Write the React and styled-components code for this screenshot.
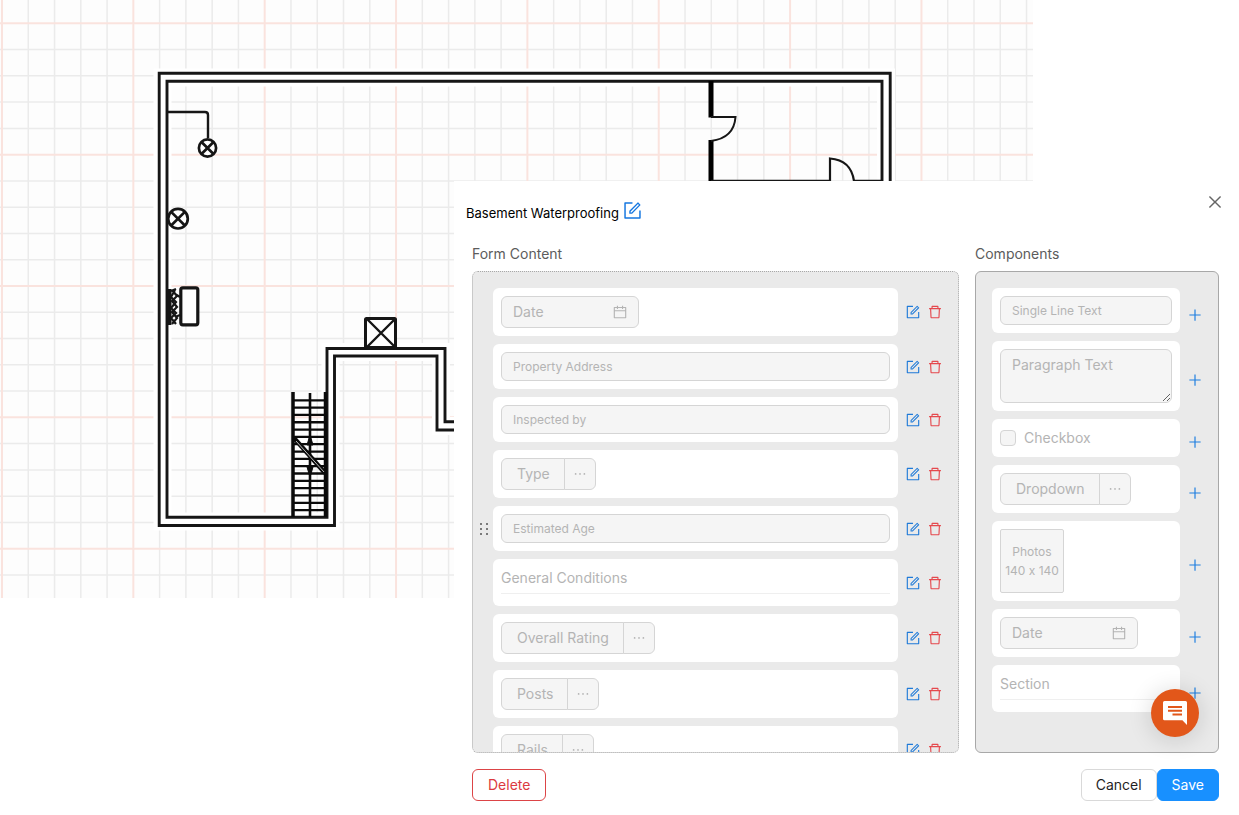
import React from "react";
import styled, { createGlobalStyle } from "styled-components";
import {
  AiOutlineForm,
  AiOutlineDelete,
  AiOutlineCalendar,
  AiOutlineClose,
  AiOutlinePlus,
  AiOutlineEllipsis,
} from "react-icons/ai";

const GlobalStyle = createGlobalStyle`
  * { box-sizing: border-box; }
  body {
    margin: 0;
    background: #fff;
    color: #000;
    font: 14px/22px Inter, "Liberation Sans", sans-serif;
    font-feature-settings: "calt" 0;
  }
  button, input, textarea { font: inherit; margin: 0; }
  h1, h2, p, ul { margin: 0; padding: 0; font: inherit; }
  ul { list-style: none; }
`;

const Stage = styled.main`
  display: grid;
  grid-template-columns: minmax(0, 1fr);
  grid-template-rows: minmax(0, 1fr);
  height: 100vh;
  min-height: 480px;
  overflow: hidden;
`;

const Plan = styled.svg`
  grid-area: 1 / 1;
  justify-self: start;
  align-self: start;
  width: 1033px;
  height: 598px;
`;

const Dialog = styled.section`
  grid-area: 1 / 1;
  z-index: 1;
  display: flex;
  flex-direction: column;
  min-height: 0;
  margin: 181px 0 0 454px;
  padding: 8px 20px 14px 18px;
  background: #fff;
`;

const DialogHeader = styled.header`
  display: flex;
  align-items: center;
  justify-content: space-between;
  height: 48px;
  margin: 0 -5px 0 -6px;
`;

const TitleGroup = styled.div`
  display: flex;
  align-items: center;
  gap: 3px;
`;

const Title = styled.h1`
  font-size: 13px;
  line-height: 20px;
`;

const IconButton = styled.button`
  display: flex;
  flex: none;
  padding: 0;
  border: 0;
  background: none;
  color: ${(p) => p.$color};
  font-size: ${(p) => p.$size || 16}px;
  cursor: pointer;
`;

const CloseButton = styled(IconButton)`
  align-self: flex-start;
  padding-top: 4px;
`;

const TitleEdit = styled(IconButton)`
  padding-bottom: 5px;
`;

const Columns = styled.div`
  flex: 1;
  display: grid;
  grid-template-columns: minmax(0, 1fr) 244px;
  grid-template-rows: auto minmax(0, 1fr);
  column-gap: 16px;
  min-height: 0;
`;

const ColumnTitle = styled.h2`
  height: 34px;
  padding-top: 6px;
  color: #5c5c5c;
  font-size: 14px;
`;

const Panel = styled.ul`
  display: flex;
  flex-direction: column;
  gap: 8px;
  min-height: 0;
  padding: 16px 0;
  overflow-y: auto;
  scrollbar-width: none;
  border: 1px ${(p) => p.$line} #a8a8a8;
  border-radius: 6px;
  background: #eaeaea;
`;

const FormRow = styled.li`
  flex: none;
  display: grid;
  grid-template-columns: 20px minmax(0, 1fr) 60px;
  align-items: center;
`;

const PaletteRow = styled.li`
  flex: none;
  display: grid;
  grid-template-columns: minmax(0, 1fr) 38px;
  align-items: center;
  padding-left: 16px;
`;

const Card = styled.div`
  padding: 8px;
  border-radius: 6px;
  background: #fff;
`;

const Actions = styled.div`
  display: flex;
  gap: 6px;
  padding-left: 7px;
`;

const AddButton = styled(IconButton)`
  padding: 8px 0 0 7px;
`;

const Handle = styled.span`
  display: grid;
  grid-template-columns: 2px 2px;
  gap: 3px 4px;
  justify-content: center;
  padding-left: 2px;
`;

const HandleDot = styled.i`
  height: 2px;
  border-radius: 1px;
  background: #555;
`;

const field = `
  border: 1px solid #d5d5d5;
  border-radius: 6px;
  background: #f5f5f5;
  color: #b4b4b4;
`;

const TextInput = styled.input`
  display: block;
  width: 100%;
  height: 29px;
  padding: 0 11px;
  ${field}
  font-size: 12px;
  &::placeholder { color: #b4b4b4; opacity: 1; }
`;

const TextArea = styled.textarea`
  display: block;
  width: 100%;
  height: 54px;
  padding: 4px 11px;
  ${field}
  resize: vertical;
  overflow: hidden;
  &::placeholder { color: #b4b4b4; opacity: 1; }
`;

const DateField = styled.div`
  display: flex;
  align-items: center;
  width: 138px;
  height: 32px;
  padding: 0 10px 0 11px;
  ${field}
`;

const DateInput = styled.input`
  flex: 1;
  width: 0;
  min-width: 0;
  padding: 0;
  border: 0;
  background: none;
  &::placeholder { color: #b4b4b4; opacity: 1; }
`;

const SplitButton = styled.div`
  display: inline-flex;
  height: 32px;
  vertical-align: top;
`;

const SplitMain = styled.button`
  padding: 0 14px 0 15px;
  ${field}
  border-radius: 6px 0 0 6px;
`;

const SplitMore = styled.button`
  display: flex;
  align-items: center;
  justify-content: center;
  width: 32px;
  margin-left: -1px;
  padding: 0;
  ${field}
  border-radius: 0 6px 6px 0;
`;

const CheckLabel = styled.label`
  display: flex;
  align-items: center;
  gap: 8px;
  color: #b4b4b4;
`;

const CheckInput = styled.input`
  appearance: none;
  width: 16px;
  height: 16px;
  ${field}
  border-radius: 4px;
`;

const PhotoBox = styled.div`
  display: flex;
  flex-direction: column;
  align-items: center;
  justify-content: center;
  width: 64px;
  height: 64px;
  ${field}
  border-radius: 2px;
  font-size: 12px;
  line-height: 19px;
  white-space: nowrap;
`;

const SectionText = styled.p`
  padding-bottom: 4px;
  margin-bottom: 4px;
  border-bottom: 1px solid #efefef;
  color: #b4b4b4;
`;

const Footer = styled.footer`
  display: flex;
  padding-top: 16px;
`;

const Button = styled.button`
  height: 32px;
  padding: 0 15px;
  border: 1px solid ${(p) => p.$border};
  border-radius: 6px;
  background: ${(p) => p.$bg || "#fff"};
  color: ${(p) => p.$color};
  cursor: pointer;
`;

const FooterEnd = styled.div`
  display: flex;
  margin-left: auto;

  ${Button} {
    padding: 0 14px;
  }
`;

const ChatButton = styled.button`
  position: fixed;
  z-index: 2;
  right: 40px;
  bottom: 78px;
  display: grid;
  place-items: center;
  width: 48px;
  height: 48px;
  padding: 0;
  border: 0;
  border-radius: 50%;
  background: #e2571a;
  box-shadow: 0 2px 24px rgba(0, 0, 0, 0.16);
  cursor: pointer;
`;

const PITCH = 26.27;

function GridLines() {
  const lines = [];
  for (let i = 0; i < 40; i++) {
    const x = 2 + i * PITCH;
    const red = i % 5 === 0;
    lines.push({ key: "v" + i, d: `M${x} 0V598`, red });
  }
  for (let j = 0; j < 22; j++) {
    const y = 23.3 + j * PITCH;
    lines.push({ key: "h" + j, d: `M0 ${y}H1033`, red: j % 5 === 0 });
  }
  lines.sort((a, b) => a.red - b.red);
  return lines.map((l) => (
    <path
      key={l.key}
      d={l.d}
      stroke={l.red ? "#fae3de" : "#ebebeb"}
      strokeWidth={l.red ? 2 : 1.5}
    />
  ));
}

function Lamp({ cx, cy, r }) {
  const k = r * 0.7;
  return (
    <g strokeWidth="2.700" fill="none">
      <circle cx={cx} cy={cy} r={r} fill="#fff" />
      <path d={`M${cx - k} ${cy - k}L${cx + k} ${cy + k}M${cx + k} ${cy - k}L${cx - k} ${cy + k}`} />
    </g>
  );
}

function FloorPlan() {
  const treads = Array.from({ length: 16 }, (_, i) => 400.3 + i * 7.32);
  return (
    <Plan viewBox="0 0 1033 598" role="img" aria-label="Basement floor plan">
      <rect width="1033" height="598" fill="#fdfdfd" />
      <GridLines />
      <g fill="none" stroke="#161616">
        <path
          d="M455 426H441V352H330.500V521.500H162.500V77.500H886V190"
          stroke="#fff"
          strokeWidth="18"
        />
        <path d="M456 430H437V356H334.500V525.500H159.200V73.300H890.200V190" strokeWidth="2.900" />
        <path d="M456 421.700H445V348.500H327V517.200H167V81.300H882V190" strokeWidth="2.900" />
        <path d="M168 112H205Q208 112 208 115V138" strokeWidth="2.400" />
        <Lamp cx={207.5} cy={148} r={8.6} />
        <Lamp cx={178} cy={218.700} r={9.8} />
        <rect x="180.800" y="287.800" width="17" height="37" rx="2" fill="#fff" strokeWidth="3.200" />
        <path d="M169.500 289V325" strokeWidth="4" />
        <path
          d="M171 291L176 289M172 290L177 296L172 301L177 307L172 312L177 318L172 324M175 290L171 297L176 302L171 308L176 313L171 318L176 324M175 294L180 297M175 317L180 315"
          strokeWidth="2.200"
        />
        <rect x="365.500" y="318.500" width="30" height="29" rx="1" fill="#fff" strokeWidth="3" />
        <path d="M367 319L395 347M395 319L367 347" strokeWidth="2.400" />
        <path d="M711 81V117.500M711 140V181" strokeWidth="5" stroke="#000" />
        <path d="M711 117H735.500Q734 138 711 141" strokeWidth="2" />
        <path d="M711 180.800H830M853 180.800H882" strokeWidth="2.200" />
        <path d="M830 181V158.500Q851 160 854 181" strokeWidth="2.200" />
        <g stroke="#0a0a0a">
          <path d="M293 392V517M325.500 392V517" strokeWidth="3.500" />
          <path d="M310 393V517" strokeWidth="2.600" />
          {treads.map((y) => (
            <path key={y} d={`M293 ${y}H326`} strokeWidth="2.300" />
          ))}
          <path d="M294 438L325 473" strokeWidth="4.500" />
          <path d="M296 441L324 472" strokeWidth="1" stroke="#bbb" />
          <path d="M310 435l3 10h-6zM310 477l3-10h-6z" strokeWidth="1" fill="#0a0a0a" />
        </g>
      </g>
    </Plan>
  );
}

function Control({ kind, label }) {
  switch (kind) {
    case "date":
      return (
        <DateField>
          <DateInput disabled placeholder={label} aria-label={label} />
          <AiOutlineCalendar size={16} />
        </DateField>
      );
    case "text":
      return <TextInput disabled placeholder={label} aria-label={label} />;
    case "paragraph":
      return <TextArea disabled placeholder={label} aria-label={label} />;
    case "checkbox":
      return (
        <CheckLabel>
          <CheckInput type="checkbox" disabled />
          {label}
        </CheckLabel>
      );
    case "dropdown":
      return (
        <SplitButton>
          <SplitMain disabled>{label}</SplitMain>
          <SplitMore disabled aria-label={`${label} options`}>
            <AiOutlineEllipsis size={16} />
          </SplitMore>
        </SplitButton>
      );
    case "photos":
      return (
        <PhotoBox>
          <span>{label}</span>
          <span>140 x 140</span>
        </PhotoBox>
      );
    default:
      return <SectionText>{label}</SectionText>;
  }
}

const formItems = [
  { kind: "date", label: "Date" },
  { kind: "text", label: "Property Address" },
  { kind: "text", label: "Inspected by" },
  { kind: "dropdown", label: "Type" },
  { kind: "text", label: "Estimated Age", hovered: true },
  { kind: "section", label: "General Conditions" },
  { kind: "dropdown", label: "Overall Rating" },
  { kind: "dropdown", label: "Posts" },
  { kind: "dropdown", label: "Rails" },
];

const paletteItems = [
  { kind: "text", label: "Single Line Text" },
  { kind: "paragraph", label: "Paragraph Text" },
  { kind: "checkbox", label: "Checkbox" },
  { kind: "dropdown", label: "Dropdown" },
  { kind: "photos", label: "Photos" },
  { kind: "date", label: "Date" },
  { kind: "section", label: "Section" },
];

export default function App() {
  return (
    <>
      <GlobalStyle />
      <Stage>
        <FloorPlan />
        <Dialog role="dialog" aria-labelledby="dialog-title">
          <DialogHeader>
            <TitleGroup>
              <Title id="dialog-title">Basement Waterproofing</Title>
              <TitleEdit $color="#1677e0" $size={21} aria-label="Rename form">
                <AiOutlineForm />
              </TitleEdit>
            </TitleGroup>
            <CloseButton $color="#666" $size={18} aria-label="Close">
              <AiOutlineClose />
            </CloseButton>
          </DialogHeader>
          <Columns>
            <ColumnTitle>Form Content</ColumnTitle>
            <ColumnTitle>Components</ColumnTitle>
            <Panel $line="dotted">
              {formItems.map((item) => (
                <FormRow key={item.label}>
                  {item.hovered ? (
                    <Handle>
                      {[0, 1, 2, 3, 4, 5].map((n) => (
                        <HandleDot key={n} />
                      ))}
                    </Handle>
                  ) : (
                    <span />
                  )}
                  <Card>
                    <Control {...item} />
                  </Card>
                  <Actions>
                    <IconButton $color="#1f7ad8" aria-label={`Edit ${item.label}`}>
                      <AiOutlineForm />
                    </IconButton>
                    <IconButton $color="#e5484d" aria-label={`Delete ${item.label}`}>
                      <AiOutlineDelete />
                    </IconButton>
                  </Actions>
                </FormRow>
              ))}
            </Panel>
            <Panel $line="solid">
              {paletteItems.map((item) => (
                <PaletteRow key={item.label}>
                  <Card>
                    <Control {...item} />
                  </Card>
                  <AddButton $color="#1f7fe0" aria-label={`Add ${item.label}`}>
                    <AiOutlinePlus />
                  </AddButton>
                </PaletteRow>
              ))}
            </Panel>
          </Columns>
          <Footer>
            <Button $border="#dc4446" $color="#dc3a40">Delete</Button>
            <FooterEnd>
              <Button $border="#d9d9d9" $color="#1f1f1f">Cancel</Button>
              <Button $border="#1890ff" $bg="#1890ff" $color="#fff">Save</Button>
            </FooterEnd>
          </Footer>
        </Dialog>
        <ChatButton aria-label="Open chat">
          <svg width="24" height="24" viewBox="0 0 24 24" aria-hidden="true">
            <path d="M1.500 0h21A1.500 1.500 0 0 1 24 1.500V24l-4.600-4.800H1.500A1.500 1.500 0 0 1 0 17.700V1.500A1.500 1.500 0 0 1 1.500 0z" fill="#fff" />
            <path d="M5 6h14M5 9.800h14M9.500 13.500H19" stroke="#e2571a" strokeWidth="2" />
          </svg>
        </ChatButton>
      </Stage>
    </>
  );
}
